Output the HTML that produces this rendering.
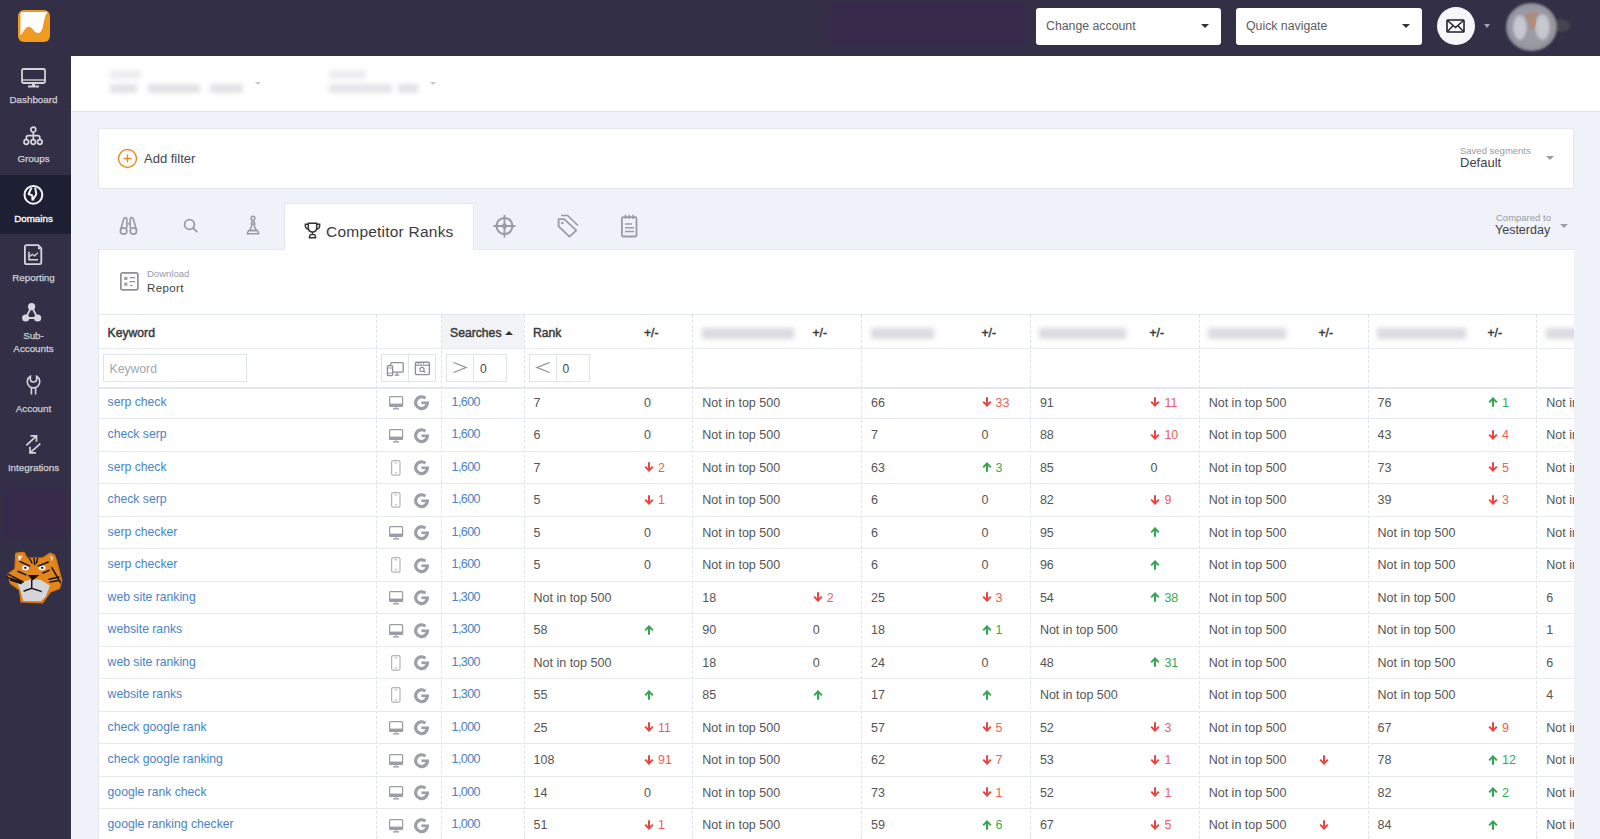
<!DOCTYPE html>
<html><head><meta charset="utf-8">
<style>
*{box-sizing:border-box}
html,body{margin:0;padding:0}
body{width:1600px;height:839px;overflow:hidden;position:relative;background:#eff2f9;font-family:"Liberation Sans",sans-serif;color:#555}
.abs{position:absolute}
#top{position:absolute;left:0;top:0;width:1600px;height:56px;background:#322f46}
#side{position:absolute;left:0;top:0;width:71px;height:839px;background:#322f46}
#sideline{position:absolute;left:71px;top:56px;width:1px;height:783px;background:#f6f7fb}
.purp{position:absolute;background:#372a4b}
.nav{position:absolute;left:0;width:71px;text-align:center;color:#d0d0d8;font-size:9.8px;line-height:12px;-webkit-text-stroke:0.25px #d0d0d8}
.nav svg{position:absolute}
.nav .lb{position:absolute;left:0;width:67px;text-align:center;white-space:nowrap}
#hdr{position:absolute;left:71px;top:56px;width:1529px;height:56px;background:#fff;border-bottom:1px solid #dde1e8}
.blur{position:absolute;filter:blur(2.2px);color:#bcbcc4;white-space:nowrap}
.card{position:absolute;background:#fff;border:1px solid #e3e7ee}
.dd{position:absolute;top:8px;height:37px;background:#fff;border-radius:3px;color:#5c5c64;font-size:12.3px;line-height:37px;padding-left:10px}
.caret{position:absolute;width:0;height:0;border-left:4px solid transparent;border-right:4px solid transparent;border-top:4px solid #333}
.tabic{position:absolute}
.c{position:absolute;top:1px;height:32px;line-height:32px;white-space:nowrap;font-size:12.5px;color:#555}
.row{position:absolute;left:0;width:1600px;height:32.47px}
.rowb{position:absolute;left:98px;width:1476px;height:1px;background:#e6e9f0}
.kw{padding-left:9.6px;font-size:12.2px;top:0}
.kw a,.sr a{color:#4783c6}
.sr{padding-left:10.6px;font-size:12.5px;letter-spacing:-0.6px;top:0}
.dv .dic{position:absolute;left:13px;top:0}
.dv .gic{position:absolute;left:37px;top:0}
.dv svg{position:absolute}
.dn{color:#ec6158}
.up{color:#39a857}
.dn b,.up b{font-weight:normal;margin-left:4px}
.ar{display:inline-block;vertical-align:-0.5px}
.vl{position:absolute;top:315px;height:524px;width:0;border-left:1px dashed #dfe2ea}
.th{position:absolute;top:316.5px;height:33px;line-height:33px;font-size:12.2px;font-weight:normal;-webkit-text-stroke:0.45px #3b3b3b;color:#3b3b3b;white-space:nowrap}
.blurh{position:absolute;top:327.5px;height:11px;filter:blur(2.5px);background:none;color:#c9c9d0;font-size:12px;line-height:11px;white-space:nowrap}
.fbox{position:absolute;top:354px;height:28px;border:1px solid #dfe3ea;background:#fff}
</style></head>
<body>
<div id="top"></div>
<div class="purp" style="left:829px;top:3px;width:199px;height:43px"></div>
<div id="side"></div>
<div id="sideline"></div>
<div class="purp" style="left:3px;top:489px;width:62px;height:49px"></div>
<div class="abs" style="left:0;top:175px;width:71px;height:59px;background:#1d2032"></div>

<!-- logo -->
<svg class="abs" style="left:17px;top:10px" width="34" height="33" viewBox="0 0 34 33">
<rect x="1" y="0" width="32" height="32" rx="6" fill="#f09a22"/>
<path d="M3.5 4Q3.5 2 5.5 2H30.5Q29 3.5 28 7Q26.5 13 25.5 18Q24 23 21 23Q18.5 23 15.5 19Q13.5 16.8 11.5 16.8Q9.5 16.8 7 20.5Q5 23.5 3.5 25.5Z" fill="#fff"/>
</svg>

<!-- nav items -->
<div class="nav" style="top:56px;height:60px">
<svg style="left:21px;top:12px" width="25" height="20" viewBox="0 0 25 20"><rect x="1" y="1" width="23" height="14" rx="1.5" fill="none" stroke="#d3d3da" stroke-width="1.8"/><line x1="1" y1="12" x2="24" y2="12" stroke="#d3d3da" stroke-width="1.4"/><rect x="11" y="15" width="3" height="3" fill="#d3d3da"/><rect x="7" y="17.5" width="11" height="2" fill="#d3d3da"/></svg>
<div class="lb" style="top:38px">Dashboard</div>
</div>
<div class="nav" style="top:116px;height:60px">
<svg style="left:23px;top:10px" width="21" height="20" viewBox="0 0 21 20"><circle cx="10.3" cy="3.7" r="2.5" fill="none" stroke="#d6d6dc" stroke-width="1.7"/><path d="M10.3 6.2V13.6M3.3 13.6V11.6Q3.3 9.7 5.3 9.7H14.8Q16.8 9.7 16.8 11.6V13.6" fill="none" stroke="#d6d6dc" stroke-width="1.7"/><circle cx="3.3" cy="16" r="2.3" fill="none" stroke="#d6d6dc" stroke-width="1.7"/><circle cx="10.2" cy="16" r="2.3" fill="none" stroke="#d6d6dc" stroke-width="1.7"/><circle cx="16.8" cy="16" r="2.3" fill="none" stroke="#d6d6dc" stroke-width="1.7"/></svg>
<div class="lb" style="top:37px">Groups</div>
</div>
<div class="nav" style="top:175px;height:59px;color:#f1f1f4">
<svg style="left:23px;top:9px" width="21" height="21" viewBox="0 0 21 21"><circle cx="10.4" cy="10.8" r="8.9" fill="none" stroke="#f4f4f6" stroke-width="2"/><path d="M8.5 3.6L5.6 10L9.2 11.4L9.5 16.5M12.2 3.6L13.3 10.3L9.5 16.5" fill="none" stroke="#f4f4f6" stroke-width="2" stroke-linejoin="round"/></svg>
<div class="lb" style="top:38px;color:#fff;-webkit-text-stroke:0.3px #fff">Domains</div>
</div>
<div class="nav" style="top:234px;height:60px">
<svg style="left:24px;top:10px" width="19" height="22" viewBox="0 0 19 22"><path d="M2.7 1.2H14.3L17.3 4.3V18.7Q17.3 20.2 15.8 20.2H2.4Q0.9 20.2 0.9 18.7V2.7Q0.9 1.2 2.7 1.2Z" fill="none" stroke="#d6d6dc" stroke-width="1.8"/><path d="M14 2V5.2H17Z" fill="#d6d6dc"/><path d="M5 7.8V15.8H14" fill="none" stroke="#d6d6dc" stroke-width="1.6"/><path d="M5.6 12.6L8.2 10.2L10.6 11.8L14 8.6" fill="none" stroke="#d6d6dc" stroke-width="1.3"/></svg>
<div class="lb" style="top:38px">Reporting</div>
</div>
<div class="nav" style="top:294px;height:70px">
<svg style="left:22px;top:9px" width="20" height="19" viewBox="0 0 20 19"><path d="M9.6 3.6L3.7 15H15.6Z" fill="none" stroke="#d6d6dc" stroke-width="1.8" stroke-linejoin="round"/><circle cx="9.6" cy="3.7" r="3.6" fill="#d6d6dc"/><circle cx="3.7" cy="15" r="3.6" fill="#d6d6dc"/><circle cx="15.6" cy="15" r="3.6" fill="#d6d6dc"/></svg>
<div class="lb" style="top:36px">Sub-</div>
<div class="lb" style="top:49px">Accounts</div>
</div>
<div class="nav" style="top:364px;height:60px">
<svg style="left:25px;top:11px" width="17" height="20" viewBox="0 0 17 20"><path d="M5.4 1.3A6.2 6.2 0 1 0 11.6 1.3V4.6Q11.6 7 8.5 7Q5.4 7 5.4 4.6Z" fill="none" stroke="#d3d3da" stroke-width="1.6"/><path d="M6.4 12.3V19.5M10.6 12.3V19.5" stroke="#d3d3da" stroke-width="1.6"/></svg>
<div class="lb" style="top:39px">Account</div>
</div>
<div class="nav" style="top:424px;height:60px">
<svg style="left:25px;top:10px" width="17" height="20" viewBox="0 0 17 20"><path d="M1.3 11.4L11.5 1.8M5.5 1.8H11.5V7.8M15.3 9.7L5 18.8M5 12.8V18.8H11" fill="none" stroke="#d3d3da" stroke-width="1.7"/></svg>
<div class="lb" style="top:38px">Integrations</div>
</div>

<!-- tiger -->
<svg class="abs" style="left:0;top:540px" width="70" height="75" viewBox="0 540 70 75">
<path d="M15.6 554 L16.2 553 L24 552.3 L27 558 L43 557.8 L50 553 L54.5 555 L56.5 560.5 L61.8 580.5 L59.5 588.5 L50.5 592 L42.5 602.8 L21 602 L19.5 590 L10.5 583.5 L7.8 574 L15 569 Z" fill="#e2851a" stroke="#d77708" stroke-width="1.2" stroke-linejoin="round"/>
<path d="M17.5 583 L31 579.5 L40 579.5 L50 585.5 L45.5 597 L41 601 L23.5 601 L20.5 591 Z" fill="#d6d6da"/>
<path d="M17.8 555.8 L22.5 555.8 L19.2 562 Z M50 556 L53 557 L52 561.5 Z" fill="#e4e6ee"/>
<ellipse cx="25.5" cy="567.8" rx="3.6" ry="2.6" fill="#e8e9ef"/><ellipse cx="42" cy="567.8" rx="3.6" ry="2.6" fill="#e8e9ef"/>
<circle cx="25.3" cy="567.8" r="1.1" fill="#111"/><circle cx="42.2" cy="567.8" r="1.1" fill="#111"/>
<path d="M19.7 561.4 L29.5 566 M48.3 562 L38.4 566 M29.5 558.5 L32 563 M34 558.5 L34.8 564.5 M37.5 558.5 L36.5 563 M17.9 571.3 L25.9 574.9 M42.9 573 L49.1 570.4 M8 574.2 L23.2 582 M7.3 577.3 L22 582.5 M10.5 580 L21 583.5 M49 579.3 L59 577 M50 582 L58.5 580.5 M51.8 567.7 L60.5 582.5 M31.7 580 L31.7 587.4 M24.1 591 L31.7 588.3 L41.1 591.4" fill="none" stroke="#17161c" stroke-width="1.5" stroke-linecap="round"/>
<path d="M27.7 574.9 L39.3 574.9 L32.6 580.5 Z" fill="#111"/>
</svg>

<!-- header dropdowns -->
<div class="dd" style="left:1036px;width:185px">Change account</div>
<div class="caret" style="left:1201px;top:24px"></div>
<div class="dd" style="left:1236px;width:186px">Quick navigate</div>
<div class="caret" style="left:1402px;top:24px"></div>
<div class="abs" style="left:1437px;top:7px;width:38px;height:38px;border-radius:50%;background:#f7f7f9"></div>
<svg class="abs" style="left:1446px;top:19px" width="19" height="14" viewBox="0 0 19 14"><rect x="1" y="1" width="17" height="12" rx="0.8" fill="none" stroke="#222" stroke-width="1.6"/><path d="M1.5 1.5L9.5 8.5L17.5 1.5M1.5 12.5L7.2 6.5M17.5 12.5L11.8 6.5" fill="none" stroke="#222" stroke-width="1.4"/></svg>
<div class="caret" style="left:1484px;top:24px;border-top-color:#a3a3b0;border-left-width:3.5px;border-right-width:3.5px"></div>
<div class="abs" style="left:1552px;top:19px;width:18px;height:13px;border-radius:50%;background:#46454f;filter:blur(0.8px)"></div>
<div class="abs" style="left:1506px;top:3px;width:51px;height:48px;border-radius:50%;background:radial-gradient(ellipse at center,#9c9ca2 0%,#9a9aa2 55%,#8c8c96 72%,#5a5966 90%,#3a3848 100%);filter:blur(1px)"></div>
<div class="abs" style="left:1513px;top:15px;width:14px;height:25px;border-radius:50%;background:radial-gradient(ellipse at center,#cacad0 0%,#c4c5cf 50%,#aeb0bd 100%);filter:blur(1px)"></div>
<div class="abs" style="left:1535px;top:14px;width:15px;height:26px;border-radius:50%;background:radial-gradient(ellipse at center,#cacad0 0%,#c4c5cf 50%,#aeb0bd 100%);filter:blur(1px)"></div>
<svg class="abs" style="left:1524px;top:11px" width="16" height="20" viewBox="0 0 16 20"><path d="M0.7 2.5L10.5 1.5L13 0.5L14.5 2.5L12 7L11.5 15L8 19L6 16.5L3 8Z" fill="#b18c7a"/></svg>

<!-- header strip -->
<div id="hdr"></div>
<div class="blur" style="left:110px;top:70px;width:31px;height:9px;background:#ededf0;filter:blur(2.5px)"></div>
<div class="blur" style="left:110px;top:84px;width:27px;height:9px;background:#e3e3e7;filter:blur(2.2px)"></div>
<div class="blur" style="left:148px;top:84px;width:52px;height:9px;background:#e3e3e7;filter:blur(2.2px)"></div>
<div class="blur" style="left:210px;top:84px;width:33px;height:9px;background:#e3e3e7;filter:blur(2.2px)"></div>
<div class="caret" style="left:255px;top:82px;border-top-color:#c8c8ce;border-left-width:3px;border-right-width:3px;border-top-width:3px"></div>
<div class="blur" style="left:329px;top:70px;width:37px;height:9px;background:#ededf0;filter:blur(2.5px)"></div>
<div class="blur" style="left:329px;top:84px;width:63px;height:9px;background:#e6e6ea;filter:blur(2.2px)"></div>
<div class="blur" style="left:398px;top:84px;width:20px;height:9px;background:#e3e3e7;filter:blur(2.2px)"></div>
<div class="caret" style="left:430px;top:82px;border-top-color:#c8c8ce;border-left-width:3px;border-right-width:3px;border-top-width:3px"></div>

<!-- filter card -->
<div class="card" style="left:98px;top:128px;width:1476px;height:61px"></div>
<svg class="abs" style="left:117px;top:148px" width="21" height="21" viewBox="0 0 21 21"><circle cx="10.5" cy="10.5" r="9" fill="none" stroke="#e98a1c" stroke-width="1.4"/><path d="M10.5 6.5V14.5M6.5 10.5H14.5" stroke="#e98a1c" stroke-width="1.4"/></svg>
<div class="abs" style="left:144px;top:151px;font-size:13px;line-height:16px;color:#44444e">Add filter</div>
<div class="abs" style="left:1460px;top:146px;font-size:9.5px;line-height:10px;color:#9a9aa4">Saved segments</div>
<div class="abs" style="left:1460px;top:155px;font-size:13px;line-height:15px;color:#3f3f46">Default</div>
<div class="caret" style="left:1546px;top:156px;border-top-color:#9c9ca6;border-left-width:4px;border-right-width:4px;border-top-width:4.5px"></div>

<!-- tabs -->
<svg class="tabic" style="left:119px;top:216px" width="19" height="19" viewBox="0 0 19 19"><circle cx="4.6" cy="15" r="3.2" fill="none" stroke="#9a9ba5" stroke-width="1.7"/><circle cx="14.4" cy="15" r="3.2" fill="none" stroke="#9a9ba5" stroke-width="1.7"/><path d="M1.5 14.3L4.6 3.2Q5.3 1.4 6.5 1.5Q7.9 1.7 7.8 3.4V12M17.5 14.3L14.4 3.2Q13.7 1.4 12.5 1.5Q11.1 1.7 11.2 3.4V12" fill="none" stroke="#9a9ba5" stroke-width="1.7"/><circle cx="9.5" cy="7.7" r="1" fill="#9a9ba5"/></svg>
<svg class="tabic" style="left:183px;top:218px" width="16" height="15" viewBox="0 0 16 15"><circle cx="6.5" cy="6.5" r="4.9" fill="none" stroke="#9a9ba5" stroke-width="1.8"/><path d="M10 10L13.8 13.6" stroke="#9a9ba5" stroke-width="1.9" stroke-linecap="round"/></svg>
<svg class="tabic" style="left:246px;top:215px" width="14" height="20" viewBox="0 0 14 20"><circle cx="7" cy="3.2" r="1.9" fill="none" stroke="#9a9ba5" stroke-width="1.5"/><path d="M5.2 6.5H8.8M5.6 6.5V11.5L3.5 15.5H10.5L8.4 11.5V6.5M4.5 9H9.5" fill="none" stroke="#9a9ba5" stroke-width="1.5"/><path d="M1.2 18.8L2.5 15.5H11.5L12.8 18.8Z" fill="none" stroke="#9a9ba5" stroke-width="1.5" stroke-linejoin="round"/></svg>
<div class="abs" style="left:284px;top:203px;width:190px;height:47px;background:#fff;border:1px solid #e3e7ee;border-bottom:none"></div>
<svg class="tabic" style="left:304px;top:222px" width="17" height="17" viewBox="0 0 17 17"><path d="M4.3 1.2H12.7V5.8Q12.7 10 8.5 10Q4.3 10 4.3 5.8Z" fill="none" stroke="#333" stroke-width="1.5"/><path d="M4.3 2.3H1.3V3.8Q1.3 6.8 4.6 7.3M12.7 2.3H15.7V3.8Q15.7 6.8 12.4 7.3M8.5 10V12.6" fill="none" stroke="#333" stroke-width="1.4"/><path d="M5.3 15.8L6.2 12.6H10.8L11.7 15.8Z" fill="none" stroke="#333" stroke-width="1.4" stroke-linejoin="round"/></svg>
<div class="abs" style="left:326px;top:222px;font-size:15.5px;letter-spacing:0.22px;line-height:20px;color:#3a3a44;white-space:nowrap">Competitor Ranks</div>
<svg class="tabic" style="left:493px;top:215px" width="23" height="23" viewBox="0 0 23 23"><circle cx="11.5" cy="11" r="8" fill="none" stroke="#9a9ba5" stroke-width="2.1"/><path d="M11.5 0V22.5M0.5 11H22.5" stroke="#9a9ba5" stroke-width="1.9"/><path d="M11.5 7.2L13.2 9.3L15.3 11L13.2 12.7L11.5 14.8L9.8 12.7L7.7 11L9.8 9.3Z" fill="#9a9ba5"/></svg>
<svg class="tabic" style="left:557px;top:214px" width="22" height="24" viewBox="0 0 22 24"><path d="M1.6 5.2H7.2L19.3 16.3L12.5 22.6L1.6 12.4Z" fill="none" stroke="#9a9ba5" stroke-width="1.8" stroke-linejoin="round"/><path d="M4 1.5H10.6L21 11.5" fill="none" stroke="#9a9ba5" stroke-width="1.7"/><circle cx="5.4" cy="9" r="1.3" fill="#9a9ba5"/></svg>
<svg class="tabic" style="left:620px;top:214px" width="18" height="24" viewBox="0 0 18 24"><rect x="1.9" y="3.2" width="14.6" height="19.3" rx="1.2" fill="none" stroke="#9a9ba5" stroke-width="1.8"/><path d="M5.5 0.8V5M9.2 0.8V5M13 0.8V5M5 10H12M5 13.8H14M5 17.5H14" stroke="#9a9ba5" stroke-width="1.5"/></svg>
<div class="abs" style="left:1496px;top:213px;font-size:9.5px;line-height:10px;color:#9a9aa4">Compared to</div>
<div class="abs" style="left:1495px;top:223px;font-size:12.5px;line-height:15px;color:#3f3f46">Yesterday</div>
<div class="caret" style="left:1560px;top:224px;border-top-color:#9c9ca6;border-left-width:4px;border-right-width:4px;border-top-width:4.5px"></div>

<!-- table card -->
<div class="card" style="left:98px;top:249px;width:1476px;height:600px;border-right:none"></div>
<div class="abs" style="left:285px;top:249px;width:188px;height:2px;background:#fff"></div>
<svg class="abs" style="left:120px;top:272px" width="19" height="19" viewBox="0 0 19 19"><rect x="0.9" y="0.9" width="17" height="17" rx="1.8" fill="none" stroke="#8e8f99" stroke-width="1.7"/><rect x="4.2" y="4.8" width="3.2" height="3.2" fill="#9fa0a9"/><rect x="4.2" y="10.6" width="3.2" height="3.2" fill="#9fa0a9"/><path d="M9.8 5.6H15M9.8 9.6H15M9.8 13.5H12.5" stroke="#8e8f99" stroke-width="1.2"/></svg>
<div class="abs" style="left:147px;top:269px;font-size:9.5px;line-height:10px;color:#9a9aa4">Download</div>
<div class="abs" style="left:147px;top:281px;font-size:11.5px;letter-spacing:0.4px;line-height:15px;color:#3f3f46">Report</div>
<div class="abs" style="left:98px;top:314px;width:1476px;height:1px;background:#e3e7ee"></div>

<!-- table header -->
<div class="abs" style="left:441.5px;top:315px;width:82px;height:33px;background:#f2f3f6"></div>
<div class="abs" style="left:98px;top:348px;width:1476px;height:1px;background:#e6e9f0"></div>
<div class="abs" style="left:98px;top:386.5px;width:1476px;height:2px;background:#e4e7ee"></div>
<div class="vl" style="left:376.0px"></div><div class="vl" style="left:441.0px"></div><div class="vl" style="left:523.5px"></div><div class="vl" style="left:692.3px"></div><div class="vl" style="left:861.1px"></div><div class="vl" style="left:1029.9px"></div><div class="vl" style="left:1198.7px"></div><div class="vl" style="left:1367.5px"></div><div class="vl" style="left:1536.3px"></div>
<div class="th" style="left:107.5px">Keyword</div>
<div class="th" style="left:450px">Searches</div>
<div class="caret" style="left:504.5px;top:331px;border-top:none;border-bottom:4px solid #333;border-left-width:4px;border-right-width:4px"></div>
<div class="th" style="left:533px">Rank</div>
<div class="th" style="left:644px">+/-</div>
<div class="th" style="left:812.5px">+/-</div>
<div class="th" style="left:981.5px">+/-</div>
<div class="th" style="left:1149.5px">+/-</div>
<div class="th" style="left:1318.5px">+/-</div>
<div class="th" style="left:1487.5px">+/-</div>
<div class="blurh" style="left:702px;width:92px;background:#dadae0"></div>
<div class="blurh" style="left:871px;width:63px;background:#dadae0"></div>
<div class="blurh" style="left:1039px;width:87px;background:#dadae0"></div>
<div class="blurh" style="left:1208px;width:78px;background:#dadae0"></div>
<div class="blurh" style="left:1377px;width:89px;background:#dadae0"></div>
<div class="blurh" style="left:1546px;width:40px;background:#dadae0"></div>

<!-- filter row -->
<div class="fbox" style="left:103px;width:144px;font-size:12.2px;line-height:27px;color:#a4a5ad;padding-left:5.5px;padding-top:1px">Keyword</div>
<div class="fbox" style="left:381px;width:28px"></div>
<div class="fbox" style="left:408px;width:28px"></div>
<svg class="abs" style="left:386px;top:360px" width="19" height="17" viewBox="0 0 19 17"><rect x="4.6" y="2.6" width="12.6" height="9.6" rx="1" fill="none" stroke="#8e8f99" stroke-width="1.3"/><path d="M11 12.2V14.6M8.6 15.2H13.2" stroke="#8e8f99" stroke-width="1.2"/><rect x="1.4" y="5.6" width="5.2" height="10" rx="1" fill="#fff" stroke="#8e8f99" stroke-width="1.3"/><path d="M1.4 8H6.6M1.4 13.2H6.6" stroke="#8e8f99" stroke-width="0.9"/></svg>
<svg class="abs" style="left:414px;top:361px" width="17" height="15" viewBox="0 0 17 15"><rect x="1.4" y="1.2" width="14" height="12.4" rx="1.4" fill="none" stroke="#8e8f99" stroke-width="1.4"/><path d="M1.4 4.2H15.4" stroke="#8e8f99" stroke-width="1.2"/><path d="M4 2.7H5M6.5 2.7H7.5M9 2.7H10" stroke="#8e8f99" stroke-width="1"/><circle cx="8" cy="8.4" r="2.1" fill="none" stroke="#8e8f99" stroke-width="1.2"/><path d="M9.5 9.9L11.3 11.6" stroke="#8e8f99" stroke-width="1.3"/></svg>
<div class="fbox" style="left:446px;width:28px"></div>
<div class="fbox" style="left:473px;width:34px;font-size:12px;line-height:27px;color:#444;padding-left:6px;padding-top:1px">0</div>
<svg class="abs" style="left:452px;top:361px" width="16" height="13" viewBox="0 0 16 13"><path d="M1.5 1.5L14 6.5L1.5 11.5" fill="none" stroke="#8e8f97" stroke-width="1.3"/></svg>
<div class="fbox" style="left:528.5px;width:28px"></div>
<div class="fbox" style="left:555.5px;width:34px;font-size:12px;line-height:27px;color:#444;padding-left:6px;padding-top:1px">0</div>
<svg class="abs" style="left:535px;top:361px" width="16" height="13" viewBox="0 0 16 13"><path d="M14.5 1.5L2 6.5L14.5 11.5" fill="none" stroke="#8e8f97" stroke-width="1.3"/></svg>

<div class="row" style="top:385.90px"><div class="c kw" style="left:98px;width:278px"><a>serp check</a></div><div class="c dv" style="left:376px;width:65px"><svg style="top:9.5px;left:12.8px" width="15" height="14" viewBox="0 0 15 14"><rect x="0.6" y="0.6" width="13" height="9.9" rx="0.9" fill="none" stroke="#9a9ca6" stroke-width="1.2"/><rect x="0.6" y="7.6" width="13" height="2.9" fill="#9a9ca6"/><rect x="6.6" y="10.4" width="1.1" height="1.9" fill="#9a9ca6"/><rect x="4" y="12.2" width="6.2" height="1.3" fill="#9a9ca6"/></svg><svg style="top:8.6px;left:38px" width="16" height="16" viewBox="0 0 16 16"><path d="M11.4 3.2A5.9 5.9 0 1 0 13.45 7.8" fill="none" stroke="#9c9eaa" stroke-width="3.2"/><path d="M7.4 7.8H15" stroke="#9c9eaa" stroke-width="2.7"/></svg></div><div class="c sr" style="left:441px;width:82.5px"><a>1,600</a></div><div class="c v" style="left:533.5px">7</div><div class="c dl" style="left:644.0px"><span class="z">0</span></div><div class="c v" style="left:702.3px">Not in top 500</div><div class="c v" style="left:871.1px">66</div><div class="c dl" style="left:981.6px"><span class="dn"><svg class="ar" width="10" height="10" viewBox="0 0 10 10"><path d="M5 0.3V8.3M1.2 4.6L5 8.6L8.8 4.6" fill="none" stroke="#e8453f" stroke-width="2"/></svg><b>33</b></span></div><div class="c v" style="left:1039.9px">91</div><div class="c dl" style="left:1150.4px"><span class="dn"><svg class="ar" width="10" height="10" viewBox="0 0 10 10"><path d="M5 0.3V8.3M1.2 4.6L5 8.6L8.8 4.6" fill="none" stroke="#e8453f" stroke-width="2"/></svg><b>11</b></span></div><div class="c v" style="left:1208.7px">Not in top 500</div><div class="c v" style="left:1377.5px">76</div><div class="c dl" style="left:1488.0px"><span class="up"><svg class="ar" width="10" height="10" viewBox="0 0 10 10"><path d="M5 9.7V1.7M1.2 5.4L5 1.4L8.8 5.4" fill="none" stroke="#33a651" stroke-width="2"/></svg><b>1</b></span></div><div class="c v" style="left:1546.3px">Not in top 500</div></div>
<div class="rowb" style="top:418.37px"></div>
<div class="row" style="top:418.37px"><div class="c kw" style="left:98px;width:278px"><a>check serp</a></div><div class="c dv" style="left:376px;width:65px"><svg style="top:9.5px;left:12.8px" width="15" height="14" viewBox="0 0 15 14"><rect x="0.6" y="0.6" width="13" height="9.9" rx="0.9" fill="none" stroke="#9a9ca6" stroke-width="1.2"/><rect x="0.6" y="7.6" width="13" height="2.9" fill="#9a9ca6"/><rect x="6.6" y="10.4" width="1.1" height="1.9" fill="#9a9ca6"/><rect x="4" y="12.2" width="6.2" height="1.3" fill="#9a9ca6"/></svg><svg style="top:8.6px;left:38px" width="16" height="16" viewBox="0 0 16 16"><path d="M11.4 3.2A5.9 5.9 0 1 0 13.45 7.8" fill="none" stroke="#9c9eaa" stroke-width="3.2"/><path d="M7.4 7.8H15" stroke="#9c9eaa" stroke-width="2.7"/></svg></div><div class="c sr" style="left:441px;width:82.5px"><a>1,600</a></div><div class="c v" style="left:533.5px">6</div><div class="c dl" style="left:644.0px"><span class="z">0</span></div><div class="c v" style="left:702.3px">Not in top 500</div><div class="c v" style="left:871.1px">7</div><div class="c dl" style="left:981.6px"><span class="z">0</span></div><div class="c v" style="left:1039.9px">88</div><div class="c dl" style="left:1150.4px"><span class="dn"><svg class="ar" width="10" height="10" viewBox="0 0 10 10"><path d="M5 0.3V8.3M1.2 4.6L5 8.6L8.8 4.6" fill="none" stroke="#e8453f" stroke-width="2"/></svg><b>10</b></span></div><div class="c v" style="left:1208.7px">Not in top 500</div><div class="c v" style="left:1377.5px">43</div><div class="c dl" style="left:1488.0px"><span class="dn"><svg class="ar" width="10" height="10" viewBox="0 0 10 10"><path d="M5 0.3V8.3M1.2 4.6L5 8.6L8.8 4.6" fill="none" stroke="#e8453f" stroke-width="2"/></svg><b>4</b></span></div><div class="c v" style="left:1546.3px">Not in top 500</div></div>
<div class="rowb" style="top:450.84px"></div>
<div class="row" style="top:450.84px"><div class="c kw" style="left:98px;width:278px"><a>serp check</a></div><div class="c dv" style="left:376px;width:65px"><svg style="top:8.2px;left:15px" width="10" height="16" viewBox="0 0 10 16"><rect x="0.6" y="0.6" width="8.4" height="14.6" rx="1.5" fill="none" stroke="#b3b4bb" stroke-width="1.2"/><rect x="3.2" y="2.2" width="3.2" height="1.2" fill="#c0c1c7"/><rect x="4.2" y="12" width="1.3" height="1.6" fill="#b3b4bb"/></svg><svg style="top:8.6px;left:38px" width="16" height="16" viewBox="0 0 16 16"><path d="M11.4 3.2A5.9 5.9 0 1 0 13.45 7.8" fill="none" stroke="#9c9eaa" stroke-width="3.2"/><path d="M7.4 7.8H15" stroke="#9c9eaa" stroke-width="2.7"/></svg></div><div class="c sr" style="left:441px;width:82.5px"><a>1,600</a></div><div class="c v" style="left:533.5px">7</div><div class="c dl" style="left:644.0px"><span class="dn"><svg class="ar" width="10" height="10" viewBox="0 0 10 10"><path d="M5 0.3V8.3M1.2 4.6L5 8.6L8.8 4.6" fill="none" stroke="#e8453f" stroke-width="2"/></svg><b>2</b></span></div><div class="c v" style="left:702.3px">Not in top 500</div><div class="c v" style="left:871.1px">63</div><div class="c dl" style="left:981.6px"><span class="up"><svg class="ar" width="10" height="10" viewBox="0 0 10 10"><path d="M5 9.7V1.7M1.2 5.4L5 1.4L8.8 5.4" fill="none" stroke="#33a651" stroke-width="2"/></svg><b>3</b></span></div><div class="c v" style="left:1039.9px">85</div><div class="c dl" style="left:1150.4px"><span class="z">0</span></div><div class="c v" style="left:1208.7px">Not in top 500</div><div class="c v" style="left:1377.5px">73</div><div class="c dl" style="left:1488.0px"><span class="dn"><svg class="ar" width="10" height="10" viewBox="0 0 10 10"><path d="M5 0.3V8.3M1.2 4.6L5 8.6L8.8 4.6" fill="none" stroke="#e8453f" stroke-width="2"/></svg><b>5</b></span></div><div class="c v" style="left:1546.3px">Not in top 500</div></div>
<div class="rowb" style="top:483.31px"></div>
<div class="row" style="top:483.31px"><div class="c kw" style="left:98px;width:278px"><a>check serp</a></div><div class="c dv" style="left:376px;width:65px"><svg style="top:8.2px;left:15px" width="10" height="16" viewBox="0 0 10 16"><rect x="0.6" y="0.6" width="8.4" height="14.6" rx="1.5" fill="none" stroke="#b3b4bb" stroke-width="1.2"/><rect x="3.2" y="2.2" width="3.2" height="1.2" fill="#c0c1c7"/><rect x="4.2" y="12" width="1.3" height="1.6" fill="#b3b4bb"/></svg><svg style="top:8.6px;left:38px" width="16" height="16" viewBox="0 0 16 16"><path d="M11.4 3.2A5.9 5.9 0 1 0 13.45 7.8" fill="none" stroke="#9c9eaa" stroke-width="3.2"/><path d="M7.4 7.8H15" stroke="#9c9eaa" stroke-width="2.7"/></svg></div><div class="c sr" style="left:441px;width:82.5px"><a>1,600</a></div><div class="c v" style="left:533.5px">5</div><div class="c dl" style="left:644.0px"><span class="dn"><svg class="ar" width="10" height="10" viewBox="0 0 10 10"><path d="M5 0.3V8.3M1.2 4.6L5 8.6L8.8 4.6" fill="none" stroke="#e8453f" stroke-width="2"/></svg><b>1</b></span></div><div class="c v" style="left:702.3px">Not in top 500</div><div class="c v" style="left:871.1px">6</div><div class="c dl" style="left:981.6px"><span class="z">0</span></div><div class="c v" style="left:1039.9px">82</div><div class="c dl" style="left:1150.4px"><span class="dn"><svg class="ar" width="10" height="10" viewBox="0 0 10 10"><path d="M5 0.3V8.3M1.2 4.6L5 8.6L8.8 4.6" fill="none" stroke="#e8453f" stroke-width="2"/></svg><b>9</b></span></div><div class="c v" style="left:1208.7px">Not in top 500</div><div class="c v" style="left:1377.5px">39</div><div class="c dl" style="left:1488.0px"><span class="dn"><svg class="ar" width="10" height="10" viewBox="0 0 10 10"><path d="M5 0.3V8.3M1.2 4.6L5 8.6L8.8 4.6" fill="none" stroke="#e8453f" stroke-width="2"/></svg><b>3</b></span></div><div class="c v" style="left:1546.3px">Not in top 500</div></div>
<div class="rowb" style="top:515.78px"></div>
<div class="row" style="top:515.78px"><div class="c kw" style="left:98px;width:278px"><a>serp checker</a></div><div class="c dv" style="left:376px;width:65px"><svg style="top:9.5px;left:12.8px" width="15" height="14" viewBox="0 0 15 14"><rect x="0.6" y="0.6" width="13" height="9.9" rx="0.9" fill="none" stroke="#9a9ca6" stroke-width="1.2"/><rect x="0.6" y="7.6" width="13" height="2.9" fill="#9a9ca6"/><rect x="6.6" y="10.4" width="1.1" height="1.9" fill="#9a9ca6"/><rect x="4" y="12.2" width="6.2" height="1.3" fill="#9a9ca6"/></svg><svg style="top:8.6px;left:38px" width="16" height="16" viewBox="0 0 16 16"><path d="M11.4 3.2A5.9 5.9 0 1 0 13.45 7.8" fill="none" stroke="#9c9eaa" stroke-width="3.2"/><path d="M7.4 7.8H15" stroke="#9c9eaa" stroke-width="2.7"/></svg></div><div class="c sr" style="left:441px;width:82.5px"><a>1,600</a></div><div class="c v" style="left:533.5px">5</div><div class="c dl" style="left:644.0px"><span class="z">0</span></div><div class="c v" style="left:702.3px">Not in top 500</div><div class="c v" style="left:871.1px">6</div><div class="c dl" style="left:981.6px"><span class="z">0</span></div><div class="c v" style="left:1039.9px">95</div><div class="c dl" style="left:1150.4px"><span class="up"><svg class="ar" width="10" height="10" viewBox="0 0 10 10"><path d="M5 9.7V1.7M1.2 5.4L5 1.4L8.8 5.4" fill="none" stroke="#33a651" stroke-width="2"/></svg><b></b></span></div><div class="c v" style="left:1208.7px">Not in top 500</div><div class="c v" style="left:1377.5px">Not in top 500</div><div class="c v" style="left:1546.3px">Not in top 500</div></div>
<div class="rowb" style="top:548.25px"></div>
<div class="row" style="top:548.25px"><div class="c kw" style="left:98px;width:278px"><a>serp checker</a></div><div class="c dv" style="left:376px;width:65px"><svg style="top:8.2px;left:15px" width="10" height="16" viewBox="0 0 10 16"><rect x="0.6" y="0.6" width="8.4" height="14.6" rx="1.5" fill="none" stroke="#b3b4bb" stroke-width="1.2"/><rect x="3.2" y="2.2" width="3.2" height="1.2" fill="#c0c1c7"/><rect x="4.2" y="12" width="1.3" height="1.6" fill="#b3b4bb"/></svg><svg style="top:8.6px;left:38px" width="16" height="16" viewBox="0 0 16 16"><path d="M11.4 3.2A5.9 5.9 0 1 0 13.45 7.8" fill="none" stroke="#9c9eaa" stroke-width="3.2"/><path d="M7.4 7.8H15" stroke="#9c9eaa" stroke-width="2.7"/></svg></div><div class="c sr" style="left:441px;width:82.5px"><a>1,600</a></div><div class="c v" style="left:533.5px">5</div><div class="c dl" style="left:644.0px"><span class="z">0</span></div><div class="c v" style="left:702.3px">Not in top 500</div><div class="c v" style="left:871.1px">6</div><div class="c dl" style="left:981.6px"><span class="z">0</span></div><div class="c v" style="left:1039.9px">96</div><div class="c dl" style="left:1150.4px"><span class="up"><svg class="ar" width="10" height="10" viewBox="0 0 10 10"><path d="M5 9.7V1.7M1.2 5.4L5 1.4L8.8 5.4" fill="none" stroke="#33a651" stroke-width="2"/></svg><b></b></span></div><div class="c v" style="left:1208.7px">Not in top 500</div><div class="c v" style="left:1377.5px">Not in top 500</div><div class="c v" style="left:1546.3px">Not in top 500</div></div>
<div class="rowb" style="top:580.72px"></div>
<div class="row" style="top:580.72px"><div class="c kw" style="left:98px;width:278px"><a>web site ranking</a></div><div class="c dv" style="left:376px;width:65px"><svg style="top:9.5px;left:12.8px" width="15" height="14" viewBox="0 0 15 14"><rect x="0.6" y="0.6" width="13" height="9.9" rx="0.9" fill="none" stroke="#9a9ca6" stroke-width="1.2"/><rect x="0.6" y="7.6" width="13" height="2.9" fill="#9a9ca6"/><rect x="6.6" y="10.4" width="1.1" height="1.9" fill="#9a9ca6"/><rect x="4" y="12.2" width="6.2" height="1.3" fill="#9a9ca6"/></svg><svg style="top:8.6px;left:38px" width="16" height="16" viewBox="0 0 16 16"><path d="M11.4 3.2A5.9 5.9 0 1 0 13.45 7.8" fill="none" stroke="#9c9eaa" stroke-width="3.2"/><path d="M7.4 7.8H15" stroke="#9c9eaa" stroke-width="2.7"/></svg></div><div class="c sr" style="left:441px;width:82.5px"><a>1,300</a></div><div class="c v" style="left:533.5px">Not in top 500</div><div class="c v" style="left:702.3px">18</div><div class="c dl" style="left:812.8px"><span class="dn"><svg class="ar" width="10" height="10" viewBox="0 0 10 10"><path d="M5 0.3V8.3M1.2 4.6L5 8.6L8.8 4.6" fill="none" stroke="#e8453f" stroke-width="2"/></svg><b>2</b></span></div><div class="c v" style="left:871.1px">25</div><div class="c dl" style="left:981.6px"><span class="dn"><svg class="ar" width="10" height="10" viewBox="0 0 10 10"><path d="M5 0.3V8.3M1.2 4.6L5 8.6L8.8 4.6" fill="none" stroke="#e8453f" stroke-width="2"/></svg><b>3</b></span></div><div class="c v" style="left:1039.9px">54</div><div class="c dl" style="left:1150.4px"><span class="up"><svg class="ar" width="10" height="10" viewBox="0 0 10 10"><path d="M5 9.7V1.7M1.2 5.4L5 1.4L8.8 5.4" fill="none" stroke="#33a651" stroke-width="2"/></svg><b>38</b></span></div><div class="c v" style="left:1208.7px">Not in top 500</div><div class="c v" style="left:1377.5px">Not in top 500</div><div class="c v" style="left:1546.3px">6</div></div>
<div class="rowb" style="top:613.19px"></div>
<div class="row" style="top:613.19px"><div class="c kw" style="left:98px;width:278px"><a>website ranks</a></div><div class="c dv" style="left:376px;width:65px"><svg style="top:9.5px;left:12.8px" width="15" height="14" viewBox="0 0 15 14"><rect x="0.6" y="0.6" width="13" height="9.9" rx="0.9" fill="none" stroke="#9a9ca6" stroke-width="1.2"/><rect x="0.6" y="7.6" width="13" height="2.9" fill="#9a9ca6"/><rect x="6.6" y="10.4" width="1.1" height="1.9" fill="#9a9ca6"/><rect x="4" y="12.2" width="6.2" height="1.3" fill="#9a9ca6"/></svg><svg style="top:8.6px;left:38px" width="16" height="16" viewBox="0 0 16 16"><path d="M11.4 3.2A5.9 5.9 0 1 0 13.45 7.8" fill="none" stroke="#9c9eaa" stroke-width="3.2"/><path d="M7.4 7.8H15" stroke="#9c9eaa" stroke-width="2.7"/></svg></div><div class="c sr" style="left:441px;width:82.5px"><a>1,300</a></div><div class="c v" style="left:533.5px">58</div><div class="c dl" style="left:644.0px"><span class="up"><svg class="ar" width="10" height="10" viewBox="0 0 10 10"><path d="M5 9.7V1.7M1.2 5.4L5 1.4L8.8 5.4" fill="none" stroke="#33a651" stroke-width="2"/></svg><b></b></span></div><div class="c v" style="left:702.3px">90</div><div class="c dl" style="left:812.8px"><span class="z">0</span></div><div class="c v" style="left:871.1px">18</div><div class="c dl" style="left:981.6px"><span class="up"><svg class="ar" width="10" height="10" viewBox="0 0 10 10"><path d="M5 9.7V1.7M1.2 5.4L5 1.4L8.8 5.4" fill="none" stroke="#33a651" stroke-width="2"/></svg><b>1</b></span></div><div class="c v" style="left:1039.9px">Not in top 500</div><div class="c v" style="left:1208.7px">Not in top 500</div><div class="c v" style="left:1377.5px">Not in top 500</div><div class="c v" style="left:1546.3px">1</div></div>
<div class="rowb" style="top:645.66px"></div>
<div class="row" style="top:645.66px"><div class="c kw" style="left:98px;width:278px"><a>web site ranking</a></div><div class="c dv" style="left:376px;width:65px"><svg style="top:8.2px;left:15px" width="10" height="16" viewBox="0 0 10 16"><rect x="0.6" y="0.6" width="8.4" height="14.6" rx="1.5" fill="none" stroke="#b3b4bb" stroke-width="1.2"/><rect x="3.2" y="2.2" width="3.2" height="1.2" fill="#c0c1c7"/><rect x="4.2" y="12" width="1.3" height="1.6" fill="#b3b4bb"/></svg><svg style="top:8.6px;left:38px" width="16" height="16" viewBox="0 0 16 16"><path d="M11.4 3.2A5.9 5.9 0 1 0 13.45 7.8" fill="none" stroke="#9c9eaa" stroke-width="3.2"/><path d="M7.4 7.8H15" stroke="#9c9eaa" stroke-width="2.7"/></svg></div><div class="c sr" style="left:441px;width:82.5px"><a>1,300</a></div><div class="c v" style="left:533.5px">Not in top 500</div><div class="c v" style="left:702.3px">18</div><div class="c dl" style="left:812.8px"><span class="z">0</span></div><div class="c v" style="left:871.1px">24</div><div class="c dl" style="left:981.6px"><span class="z">0</span></div><div class="c v" style="left:1039.9px">48</div><div class="c dl" style="left:1150.4px"><span class="up"><svg class="ar" width="10" height="10" viewBox="0 0 10 10"><path d="M5 9.7V1.7M1.2 5.4L5 1.4L8.8 5.4" fill="none" stroke="#33a651" stroke-width="2"/></svg><b>31</b></span></div><div class="c v" style="left:1208.7px">Not in top 500</div><div class="c v" style="left:1377.5px">Not in top 500</div><div class="c v" style="left:1546.3px">6</div></div>
<div class="rowb" style="top:678.13px"></div>
<div class="row" style="top:678.13px"><div class="c kw" style="left:98px;width:278px"><a>website ranks</a></div><div class="c dv" style="left:376px;width:65px"><svg style="top:8.2px;left:15px" width="10" height="16" viewBox="0 0 10 16"><rect x="0.6" y="0.6" width="8.4" height="14.6" rx="1.5" fill="none" stroke="#b3b4bb" stroke-width="1.2"/><rect x="3.2" y="2.2" width="3.2" height="1.2" fill="#c0c1c7"/><rect x="4.2" y="12" width="1.3" height="1.6" fill="#b3b4bb"/></svg><svg style="top:8.6px;left:38px" width="16" height="16" viewBox="0 0 16 16"><path d="M11.4 3.2A5.9 5.9 0 1 0 13.45 7.8" fill="none" stroke="#9c9eaa" stroke-width="3.2"/><path d="M7.4 7.8H15" stroke="#9c9eaa" stroke-width="2.7"/></svg></div><div class="c sr" style="left:441px;width:82.5px"><a>1,300</a></div><div class="c v" style="left:533.5px">55</div><div class="c dl" style="left:644.0px"><span class="up"><svg class="ar" width="10" height="10" viewBox="0 0 10 10"><path d="M5 9.7V1.7M1.2 5.4L5 1.4L8.8 5.4" fill="none" stroke="#33a651" stroke-width="2"/></svg><b></b></span></div><div class="c v" style="left:702.3px">85</div><div class="c dl" style="left:812.8px"><span class="up"><svg class="ar" width="10" height="10" viewBox="0 0 10 10"><path d="M5 9.7V1.7M1.2 5.4L5 1.4L8.8 5.4" fill="none" stroke="#33a651" stroke-width="2"/></svg><b></b></span></div><div class="c v" style="left:871.1px">17</div><div class="c dl" style="left:981.6px"><span class="up"><svg class="ar" width="10" height="10" viewBox="0 0 10 10"><path d="M5 9.7V1.7M1.2 5.4L5 1.4L8.8 5.4" fill="none" stroke="#33a651" stroke-width="2"/></svg><b></b></span></div><div class="c v" style="left:1039.9px">Not in top 500</div><div class="c v" style="left:1208.7px">Not in top 500</div><div class="c v" style="left:1377.5px">Not in top 500</div><div class="c v" style="left:1546.3px">4</div></div>
<div class="rowb" style="top:710.60px"></div>
<div class="row" style="top:710.60px"><div class="c kw" style="left:98px;width:278px"><a>check google rank</a></div><div class="c dv" style="left:376px;width:65px"><svg style="top:9.5px;left:12.8px" width="15" height="14" viewBox="0 0 15 14"><rect x="0.6" y="0.6" width="13" height="9.9" rx="0.9" fill="none" stroke="#9a9ca6" stroke-width="1.2"/><rect x="0.6" y="7.6" width="13" height="2.9" fill="#9a9ca6"/><rect x="6.6" y="10.4" width="1.1" height="1.9" fill="#9a9ca6"/><rect x="4" y="12.2" width="6.2" height="1.3" fill="#9a9ca6"/></svg><svg style="top:8.6px;left:38px" width="16" height="16" viewBox="0 0 16 16"><path d="M11.4 3.2A5.9 5.9 0 1 0 13.45 7.8" fill="none" stroke="#9c9eaa" stroke-width="3.2"/><path d="M7.4 7.8H15" stroke="#9c9eaa" stroke-width="2.7"/></svg></div><div class="c sr" style="left:441px;width:82.5px"><a>1,000</a></div><div class="c v" style="left:533.5px">25</div><div class="c dl" style="left:644.0px"><span class="dn"><svg class="ar" width="10" height="10" viewBox="0 0 10 10"><path d="M5 0.3V8.3M1.2 4.6L5 8.6L8.8 4.6" fill="none" stroke="#e8453f" stroke-width="2"/></svg><b>11</b></span></div><div class="c v" style="left:702.3px">Not in top 500</div><div class="c v" style="left:871.1px">57</div><div class="c dl" style="left:981.6px"><span class="dn"><svg class="ar" width="10" height="10" viewBox="0 0 10 10"><path d="M5 0.3V8.3M1.2 4.6L5 8.6L8.8 4.6" fill="none" stroke="#e8453f" stroke-width="2"/></svg><b>5</b></span></div><div class="c v" style="left:1039.9px">52</div><div class="c dl" style="left:1150.4px"><span class="dn"><svg class="ar" width="10" height="10" viewBox="0 0 10 10"><path d="M5 0.3V8.3M1.2 4.6L5 8.6L8.8 4.6" fill="none" stroke="#e8453f" stroke-width="2"/></svg><b>3</b></span></div><div class="c v" style="left:1208.7px">Not in top 500</div><div class="c v" style="left:1377.5px">67</div><div class="c dl" style="left:1488.0px"><span class="dn"><svg class="ar" width="10" height="10" viewBox="0 0 10 10"><path d="M5 0.3V8.3M1.2 4.6L5 8.6L8.8 4.6" fill="none" stroke="#e8453f" stroke-width="2"/></svg><b>9</b></span></div><div class="c v" style="left:1546.3px">Not in top 500</div></div>
<div class="rowb" style="top:743.07px"></div>
<div class="row" style="top:743.07px"><div class="c kw" style="left:98px;width:278px"><a>check google ranking</a></div><div class="c dv" style="left:376px;width:65px"><svg style="top:9.5px;left:12.8px" width="15" height="14" viewBox="0 0 15 14"><rect x="0.6" y="0.6" width="13" height="9.9" rx="0.9" fill="none" stroke="#9a9ca6" stroke-width="1.2"/><rect x="0.6" y="7.6" width="13" height="2.9" fill="#9a9ca6"/><rect x="6.6" y="10.4" width="1.1" height="1.9" fill="#9a9ca6"/><rect x="4" y="12.2" width="6.2" height="1.3" fill="#9a9ca6"/></svg><svg style="top:8.6px;left:38px" width="16" height="16" viewBox="0 0 16 16"><path d="M11.4 3.2A5.9 5.9 0 1 0 13.45 7.8" fill="none" stroke="#9c9eaa" stroke-width="3.2"/><path d="M7.4 7.8H15" stroke="#9c9eaa" stroke-width="2.7"/></svg></div><div class="c sr" style="left:441px;width:82.5px"><a>1,000</a></div><div class="c v" style="left:533.5px">108</div><div class="c dl" style="left:644.0px"><span class="dn"><svg class="ar" width="10" height="10" viewBox="0 0 10 10"><path d="M5 0.3V8.3M1.2 4.6L5 8.6L8.8 4.6" fill="none" stroke="#e8453f" stroke-width="2"/></svg><b>91</b></span></div><div class="c v" style="left:702.3px">Not in top 500</div><div class="c v" style="left:871.1px">62</div><div class="c dl" style="left:981.6px"><span class="dn"><svg class="ar" width="10" height="10" viewBox="0 0 10 10"><path d="M5 0.3V8.3M1.2 4.6L5 8.6L8.8 4.6" fill="none" stroke="#e8453f" stroke-width="2"/></svg><b>7</b></span></div><div class="c v" style="left:1039.9px">53</div><div class="c dl" style="left:1150.4px"><span class="dn"><svg class="ar" width="10" height="10" viewBox="0 0 10 10"><path d="M5 0.3V8.3M1.2 4.6L5 8.6L8.8 4.6" fill="none" stroke="#e8453f" stroke-width="2"/></svg><b>1</b></span></div><div class="c v" style="left:1208.7px">Not in top 500</div><div class="c dl" style="left:1319.2px"><span class="dn"><svg class="ar" width="10" height="10" viewBox="0 0 10 10"><path d="M5 0.3V8.3M1.2 4.6L5 8.6L8.8 4.6" fill="none" stroke="#e8453f" stroke-width="2"/></svg><b></b></span></div><div class="c v" style="left:1377.5px">78</div><div class="c dl" style="left:1488.0px"><span class="up"><svg class="ar" width="10" height="10" viewBox="0 0 10 10"><path d="M5 9.7V1.7M1.2 5.4L5 1.4L8.8 5.4" fill="none" stroke="#33a651" stroke-width="2"/></svg><b>12</b></span></div><div class="c v" style="left:1546.3px">Not in top 500</div></div>
<div class="rowb" style="top:775.54px"></div>
<div class="row" style="top:775.54px"><div class="c kw" style="left:98px;width:278px"><a>google rank check</a></div><div class="c dv" style="left:376px;width:65px"><svg style="top:9.5px;left:12.8px" width="15" height="14" viewBox="0 0 15 14"><rect x="0.6" y="0.6" width="13" height="9.9" rx="0.9" fill="none" stroke="#9a9ca6" stroke-width="1.2"/><rect x="0.6" y="7.6" width="13" height="2.9" fill="#9a9ca6"/><rect x="6.6" y="10.4" width="1.1" height="1.9" fill="#9a9ca6"/><rect x="4" y="12.2" width="6.2" height="1.3" fill="#9a9ca6"/></svg><svg style="top:8.6px;left:38px" width="16" height="16" viewBox="0 0 16 16"><path d="M11.4 3.2A5.9 5.9 0 1 0 13.45 7.8" fill="none" stroke="#9c9eaa" stroke-width="3.2"/><path d="M7.4 7.8H15" stroke="#9c9eaa" stroke-width="2.7"/></svg></div><div class="c sr" style="left:441px;width:82.5px"><a>1,000</a></div><div class="c v" style="left:533.5px">14</div><div class="c dl" style="left:644.0px"><span class="z">0</span></div><div class="c v" style="left:702.3px">Not in top 500</div><div class="c v" style="left:871.1px">73</div><div class="c dl" style="left:981.6px"><span class="dn"><svg class="ar" width="10" height="10" viewBox="0 0 10 10"><path d="M5 0.3V8.3M1.2 4.6L5 8.6L8.8 4.6" fill="none" stroke="#e8453f" stroke-width="2"/></svg><b>1</b></span></div><div class="c v" style="left:1039.9px">52</div><div class="c dl" style="left:1150.4px"><span class="dn"><svg class="ar" width="10" height="10" viewBox="0 0 10 10"><path d="M5 0.3V8.3M1.2 4.6L5 8.6L8.8 4.6" fill="none" stroke="#e8453f" stroke-width="2"/></svg><b>1</b></span></div><div class="c v" style="left:1208.7px">Not in top 500</div><div class="c v" style="left:1377.5px">82</div><div class="c dl" style="left:1488.0px"><span class="up"><svg class="ar" width="10" height="10" viewBox="0 0 10 10"><path d="M5 9.7V1.7M1.2 5.4L5 1.4L8.8 5.4" fill="none" stroke="#33a651" stroke-width="2"/></svg><b>2</b></span></div><div class="c v" style="left:1546.3px">Not in top 500</div></div>
<div class="rowb" style="top:808.01px"></div>
<div class="row" style="top:808.01px"><div class="c kw" style="left:98px;width:278px"><a>google ranking checker</a></div><div class="c dv" style="left:376px;width:65px"><svg style="top:9.5px;left:12.8px" width="15" height="14" viewBox="0 0 15 14"><rect x="0.6" y="0.6" width="13" height="9.9" rx="0.9" fill="none" stroke="#9a9ca6" stroke-width="1.2"/><rect x="0.6" y="7.6" width="13" height="2.9" fill="#9a9ca6"/><rect x="6.6" y="10.4" width="1.1" height="1.9" fill="#9a9ca6"/><rect x="4" y="12.2" width="6.2" height="1.3" fill="#9a9ca6"/></svg><svg style="top:8.6px;left:38px" width="16" height="16" viewBox="0 0 16 16"><path d="M11.4 3.2A5.9 5.9 0 1 0 13.45 7.8" fill="none" stroke="#9c9eaa" stroke-width="3.2"/><path d="M7.4 7.8H15" stroke="#9c9eaa" stroke-width="2.7"/></svg></div><div class="c sr" style="left:441px;width:82.5px"><a>1,000</a></div><div class="c v" style="left:533.5px">51</div><div class="c dl" style="left:644.0px"><span class="dn"><svg class="ar" width="10" height="10" viewBox="0 0 10 10"><path d="M5 0.3V8.3M1.2 4.6L5 8.6L8.8 4.6" fill="none" stroke="#e8453f" stroke-width="2"/></svg><b>1</b></span></div><div class="c v" style="left:702.3px">Not in top 500</div><div class="c v" style="left:871.1px">59</div><div class="c dl" style="left:981.6px"><span class="up"><svg class="ar" width="10" height="10" viewBox="0 0 10 10"><path d="M5 9.7V1.7M1.2 5.4L5 1.4L8.8 5.4" fill="none" stroke="#33a651" stroke-width="2"/></svg><b>6</b></span></div><div class="c v" style="left:1039.9px">67</div><div class="c dl" style="left:1150.4px"><span class="dn"><svg class="ar" width="10" height="10" viewBox="0 0 10 10"><path d="M5 0.3V8.3M1.2 4.6L5 8.6L8.8 4.6" fill="none" stroke="#e8453f" stroke-width="2"/></svg><b>5</b></span></div><div class="c v" style="left:1208.7px">Not in top 500</div><div class="c dl" style="left:1319.2px"><span class="dn"><svg class="ar" width="10" height="10" viewBox="0 0 10 10"><path d="M5 0.3V8.3M1.2 4.6L5 8.6L8.8 4.6" fill="none" stroke="#e8453f" stroke-width="2"/></svg><b></b></span></div><div class="c v" style="left:1377.5px">84</div><div class="c dl" style="left:1488.0px"><span class="up"><svg class="ar" width="10" height="10" viewBox="0 0 10 10"><path d="M5 9.7V1.7M1.2 5.4L5 1.4L8.8 5.4" fill="none" stroke="#33a651" stroke-width="2"/></svg><b></b></span></div><div class="c v" style="left:1546.3px">Not in top 500</div></div>
<div class="rowb" style="top:840.48px"></div>
<!-- right clip -->
<div class="abs" style="left:1574px;top:249px;width:26px;height:590px;background:#eff2f9"></div>
</body></html>
